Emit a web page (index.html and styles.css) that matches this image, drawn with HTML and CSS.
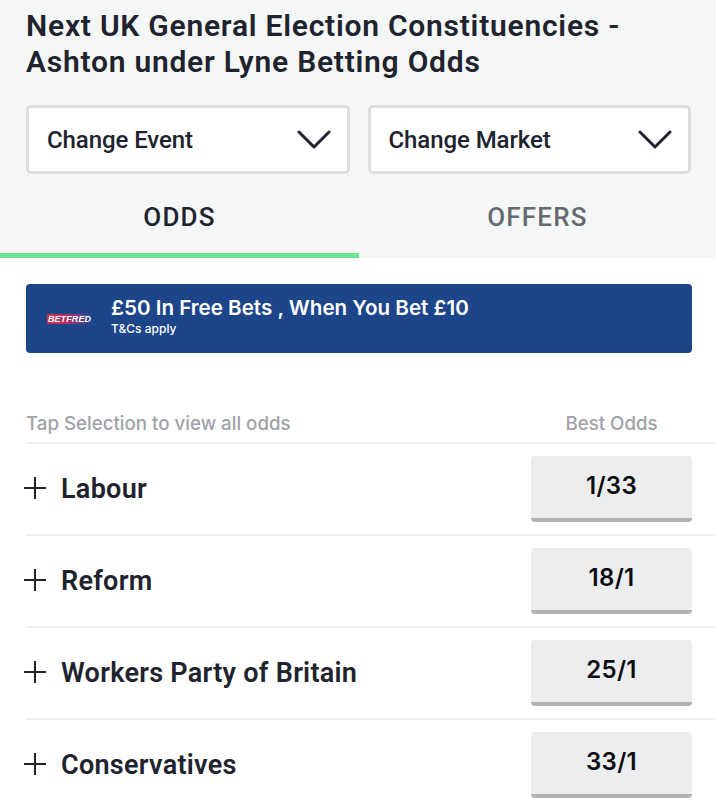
FILE: index.html
```html
<!DOCTYPE html>
<html lang="en">
<head>
<meta charset="utf-8">
<title>Ashton under Lyne Betting Odds</title>
<link rel="stylesheet" href="styles.css">
</head>
<body>
<header class="head">
  <h1 class="title">Next UK General Election Constituencies - Ashton under Lyne Betting Odds</h1>
  <div class="selects">
    <div class="select"><span>Change Event</span>
      <svg class="chev" viewBox="0 0 34 20" width="34" height="20"><path d="M2 2 L17 17 L32 2" fill="none" stroke="#20232e" stroke-width="3" stroke-linecap="round" stroke-linejoin="round"/></svg>
    </div>
    <div class="select"><span>Change Market</span>
      <svg class="chev" viewBox="0 0 34 20" width="34" height="20"><path d="M2 2 L17 17 L32 2" fill="none" stroke="#20232e" stroke-width="3" stroke-linecap="round" stroke-linejoin="round"/></svg>
    </div>
  </div>
  <nav class="tabs">
    <div class="tab active">ODDS</div>
    <div class="tab">OFFERS</div>
  </nav>
</header>
<main class="content">
  <section class="banner">
    <div class="logo">BETFRED</div>
    <div class="promo">
      <div class="promo-title">£50 In Free Bets , When You Bet £10</div>
      <div class="promo-sub">T&amp;Cs apply</div>
    </div>
  </section>
  <div class="table-head"><span>Tap Selection to view all odds</span><span class="best">Best Odds</span></div>
  <div class="row"><div class="name"><svg class="plus" viewBox="0 0 22 22" width="22" height="22"><path d="M11 0V22M0 11H22" stroke="#20232e" stroke-width="2"/></svg>Labour</div><div class="odds">1/33</div></div>
  <div class="row"><div class="name"><svg class="plus" viewBox="0 0 22 22" width="22" height="22"><path d="M11 0V22M0 11H22" stroke="#20232e" stroke-width="2"/></svg>Reform</div><div class="odds">18/1</div></div>
  <div class="row"><div class="name"><svg class="plus" viewBox="0 0 22 22" width="22" height="22"><path d="M11 0V22M0 11H22" stroke="#20232e" stroke-width="2"/></svg>Workers Party of Britain</div><div class="odds">25/1</div></div>
  <div class="row"><div class="name"><svg class="plus" viewBox="0 0 22 22" width="22" height="22"><path d="M11 0V22M0 11H22" stroke="#20232e" stroke-width="2"/></svg>Conservatives</div><div class="odds">33/1</div></div>
</main>
</body>
</html>
```
FILE: styles.css
```css
* { box-sizing: border-box; }
html, body { margin: 0; height: 800px; overflow: hidden; background: #fff; }
body { font-family: "Roboto", "Liberation Sans", sans-serif; color: #20232e; }
.head { background: #f5f7f6; height: 258px; padding-top: 8px; }
.title { margin: 0 26px; font-size: 30px; line-height: 36px; font-weight: 600; letter-spacing: 0.76px; width: 664px; }
.selects { display: flex; gap: 18px; margin: 25px 25px 0 26px; }
.select { flex: 1; height: 69px; background: #fff; border: 3px solid #dcdedd; border-radius: 5px; display: flex; align-items: center; justify-content: space-between; padding: 0 16px 0 18px; font-size: 24px; font-weight: 500; letter-spacing: -0.08px; }
.chev { display: block; }
.tabs { display: flex; margin-top: 15px; }
.tab { flex: 0 0 359px; height: 69px; padding-top: 12px; text-align: center; font-size: 26px; line-height: 32px; letter-spacing: 1.2px; font-weight: 500; color: #666a70; }
.tab:last-child { flex-basis: 357px; }
.tab.active { color: #20232e; border-bottom: 5px solid #6ae68f; }
.content { padding-top: 26px; }
.banner { margin: 0 24px 0 26px; height: 69px; background: #1d4589; border-radius: 4px; display: flex; align-items: center; color: #fff; padding-left: 21px; }
.logo { width: 45px; height: 10px; background: linear-gradient(90deg, #d0304a 0%, #b5305e 45%, #4a3f8f 85%, #1d4589 100%); font: italic 700 9px/10px "Liberation Sans", sans-serif; color: #fff; text-align: center; letter-spacing: 0.1px; white-space: nowrap; }
.promo { margin-left: 19px; margin-top: -7px; font-family: "Inter", sans-serif; }
.promo-title { font-size: 20.6px; line-height: 28px; font-weight: 600; }
.promo-sub { font-size: 12px; line-height: 14px; font-weight: 500; }
.table-head { display: flex; justify-content: space-between; margin: 57px 0 0 26px; height: 34px; border-bottom: 2px solid #eeefef; font: 500 18.7px/28px "Inter", sans-serif; color: #9fa2a8; padding-right: 24px; }
.best { width: 161px; text-align: center; }
.row { height: 92px; display: flex; align-items: center; justify-content: space-between; border-bottom: 2px solid #eeefef; margin-left: 26px; padding-right: 24px; }
.name { display: flex; align-items: center; gap: 15px; font-size: 27px; font-weight: 600; letter-spacing: 0.28px; }
.plus { margin: -2px 0 0 -2px; }
.odds { width: 161px; height: 66px; margin-top: -1px; background: #ecedef; border-bottom: 4px solid #b1b2b4; border-radius: 4px; display: flex; align-items: center; justify-content: center; padding-bottom: 3px; font: 600 24px "Inter", sans-serif; letter-spacing: 0.3px; color: #0c0c0e; }
```
